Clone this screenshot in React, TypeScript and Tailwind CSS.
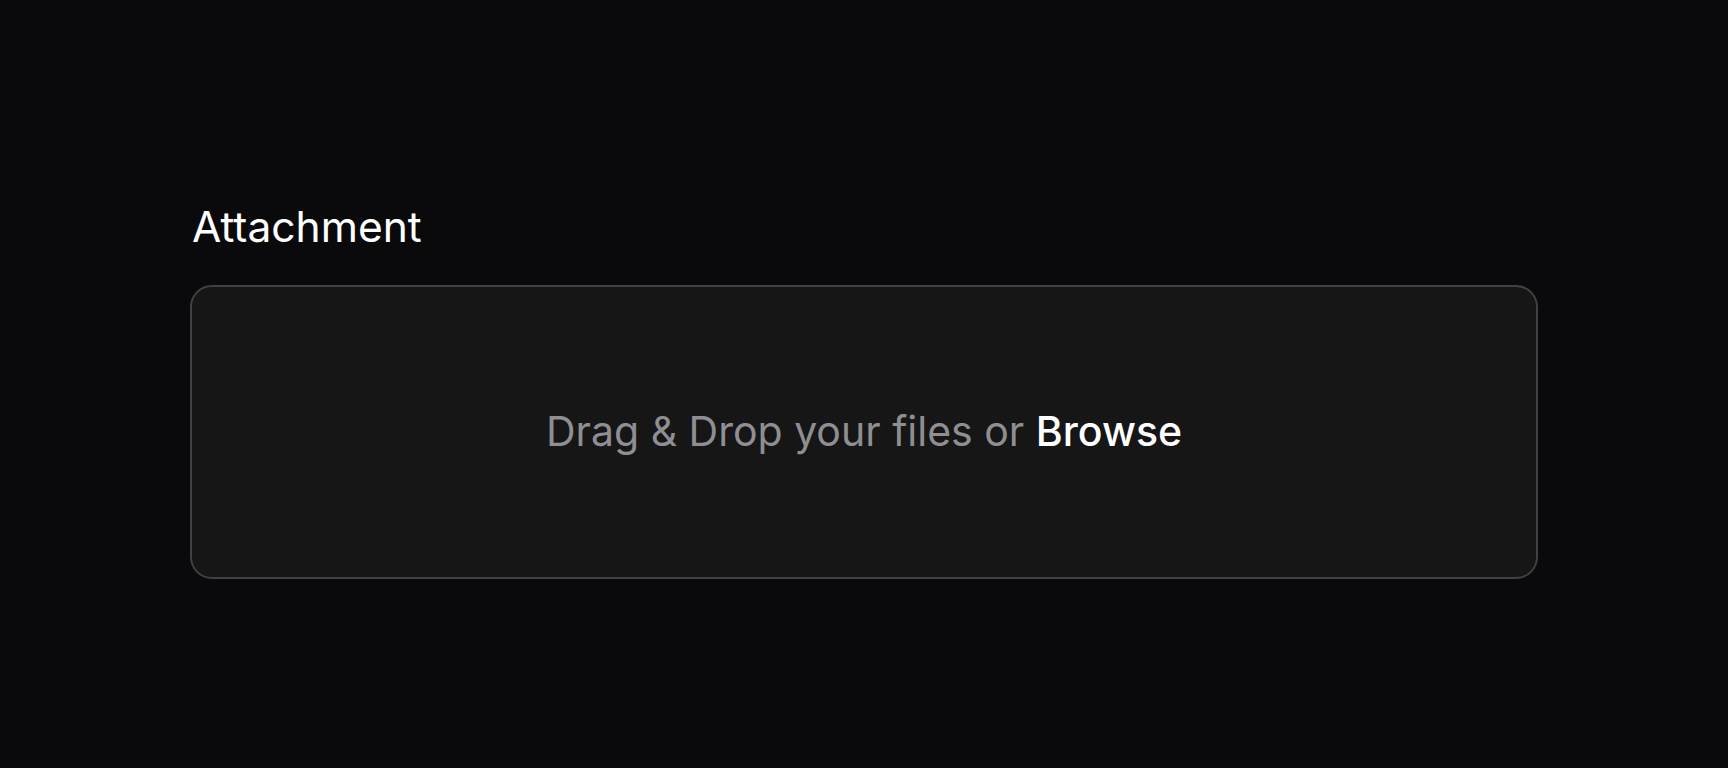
export default function App() {
  return (
    <div className="min-h-screen w-full bg-[#0a0a0c] font-['Inter',sans-serif]">
      <div className="flex flex-col pl-[190px] pr-[190px] pt-[206px]">
        <label className="pl-[2px] text-[42.5px] leading-none text-white">Attachment</label>
        <div className="mt-[36px] flex h-[294px] w-[1348px] items-center justify-center rounded-[22px] border-2 border-[#414143] bg-[#161616]">
          <p className="text-[41px] leading-none text-[#8e8e93]">
            Drag &amp; Drop your files or{' '}
            <span className="font-medium text-white">Browse</span>
          </p>
        </div>
      </div>
    </div>
  );
}
